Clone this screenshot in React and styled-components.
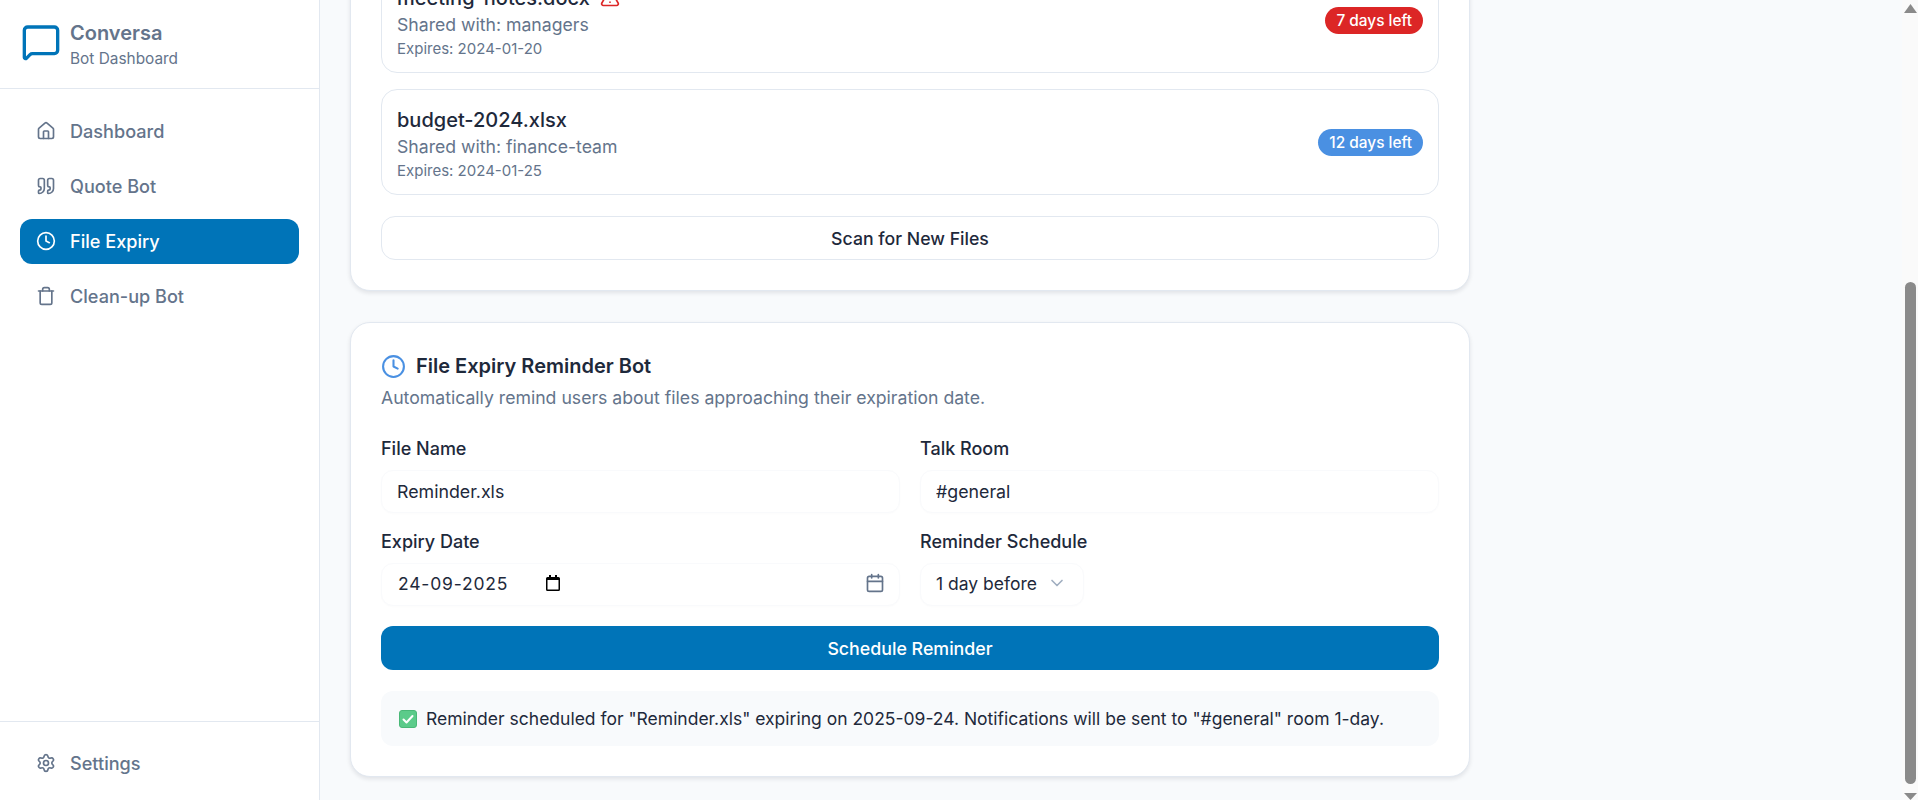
import React, { useLayoutEffect, useRef } from 'react';
import styled, { createGlobalStyle } from 'styled-components';
import { MessageSquare, House, Quote, Clock, Trash, Settings, TriangleAlert, Calendar, ChevronDown } from 'lucide-react';

const Global = createGlobalStyle`
  * { box-sizing: border-box; }
  html, body { margin: 0; padding: 0; height: 100%; overflow: hidden; }
  body { font-family: Inter, "Liberation Sans", sans-serif; color: #1e293b; background: #f8fafc; }
`;
const Shell = styled.div`display: flex; height: 100vh; background: #f8fafc;`;
const Sidebar = styled.aside`width: 320px; flex: none; display: flex; flex-direction: column; background: #fff; border-right: 1px solid #e2e8f0;`;
const Brand = styled.div`height: 89px; display: flex; align-items: center; gap: 9px; padding: 0 0 0 21px; border-bottom: 1px solid #e2e8f0; color: #0074b8;`;
const BrandMark = styled(MessageSquare)`margin-bottom: 5px;`;
const BrandText = styled.div`display: flex; flex-direction: column; gap: 3px;`;
const BrandName = styled.div`font-size: 20px; line-height: 26px; font-weight: 600; color: #64748b;`;
const BrandSub = styled.div`font-size: 15.4px; line-height: 20px; color: #64748b;`;
const Nav = styled.nav`flex: 1; display: flex; flex-direction: column; gap: 10px; padding: 20px 20px;`;
const NavItem = styled.div`
  height: 45px; display: flex; align-items: center; gap: 14px; padding: 0 16px 1px; border-radius: 12px;
  font-size: 18.1px; font-weight: 450; color: ${p => (p.$active ? '#fff' : '#64748b')};
  background: ${p => (p.$active ? '#0074b8' : 'transparent')};
`;
const SideFoot = styled.div`height: 79px; border-top: 1px solid #e2e8f0; padding: 19px 20px 0;`;
const Main = styled.main`flex: 1; min-width: 0; overflow-y: auto; scrollbar-width: none; padding: 24px 0 23px 30px;`;
const Column = styled.div`width: 1120px; display: flex; flex-direction: column; gap: 31px;`;
const PageHead = styled.header`height: 96px;`;
const PageTitle = styled.h1`margin: 0 0 8px; font-size: 30px; line-height: 36px; font-weight: 700;`;
const PageSub = styled.p`margin: 0; font-size: 16px; line-height: 24px; color: #64748b;`;
const Card = styled.section`background: #fff; border: 1px solid #e2e8f0; border-radius: 20px; padding: 29px 30px 30px; box-shadow: 0 2px 4px rgba(15, 23, 42, 0.1);`;
const CardHead = styled.div`display: flex; align-items: center; gap: 10px; height: 28px; color: #4a90e2;`;
const CardTitle = styled.h2`margin: 0; font-size: 20px; line-height: 28px; font-weight: 600; color: #1e293b;`;
const CardDesc = styled.p`margin: 6px 0 26px; font-size: 17.65px; line-height: 24px; color: #64748b;`;
const FileList = styled.div`display: flex; flex-direction: column; gap: 16px;`;
const FileRow = styled.div`display: flex; align-items: center; justify-content: space-between; height: 106px; padding: 0 15px; border: 1px solid #e2e8f0; border-radius: 16px; background: #fff;`;
const FileInfo = styled.div`display: flex; flex-direction: column; padding-top: 3px;`;
const FileName = styled.div`display: flex; align-items: center; gap: 10px; margin-bottom: 1px; font-size: 20px; line-height: 28px; font-weight: 500; color: #1e293b;`;
const FileShared = styled.div`font-size: 17.65px; line-height: 24px; color: #64748b;`;
const FileExpires = styled.div`font-size: 15px; line-height: 20px; margin-top: 2px; color: #64748b;`;
const Badge = styled.span`height: 27px; display: flex; align-items: center; padding: 0 11px; border-radius: 14px; font-size: 15.4px; font-weight: 500; color: #fff; background: ${p => p.$bg};`;
const OutlineButton = styled.button`width: 100%; height: 44px; margin-top: 21px; border: 1px solid #e2e8f0; border-radius: 14px; background: #fff; font: 500 17.7px Inter, sans-serif; color: #1e293b;`;
const FormGrid = styled.div`display: grid; grid-template-columns: 519px 519px; column-gap: 20px; row-gap: 16px;`;
const Field = styled.label`display: flex; flex-direction: column; align-items: flex-start; gap: 10px;`;
const LabelText = styled.span`font-size: 18px; line-height: 24px; font-weight: 450; padding-top: 1px; margin-bottom: -1px; color: #1e293b;`;
const Control = styled.div`
  height: 43px; width: ${p => p.$width || '100%'}; display: flex; align-items: center; padding: 0 14px ${p => (p.$lift ? '3px' : '0')} 15px;
  border: 1px solid #f9fafc; border-radius: 12px; background: #fff; box-shadow: 0 1px 2px rgba(15, 23, 42, 0.015);
  font-size: 17.5px; color: #1e293b;
`;
const TextInput = styled.input`width: 100%; border: 0; outline: 0; padding: 0; background: transparent; font: 400 17.8px Inter, sans-serif; color: #1e293b;`;
const DateText = styled.span`margin-left: 1px; letter-spacing: 0.8px;`;
const PickerIcon = styled.svg`margin-left: 38px; flex: none;`;
const PushRight = styled.span`margin-left: auto; display: flex; color: #64748b;`;
const Chevron = styled.span`margin-left: 10px; display: flex; color: #a0aec0;`;
const PrimaryButton = styled.button`width: 100%; height: 44px; margin-top: 20px; border: 0; border-radius: 12px; background: #0074b8; font: 500 17.8px Inter, sans-serif; color: #fff;`;
const Status = styled.div`display: flex; align-items: center; gap: 9px; height: 55px; margin-top: 21px; padding: 0 18px; border-radius: 12px; background: #f8fafc; font-size: 17.5px; color: #1e293b;`;
const Rail = styled.div`width: 16px; flex: none; display: flex; flex-direction: column; align-items: center; background: #fafafa;`;
const RailArrow = styled.svg`flex: none; display: block; margin-top: ${p => p.$top}px;`;
const RailThumb = styled.div`flex: none; width: 11px; height: 502px; margin-top: 269px; border-radius: 6px; background: #8a8a8a;`;

const Check = () => (
  <svg width="18" height="18" viewBox="0 0 18 18">
    <rect x="0.5" y="0.5" width="17" height="17" rx="2.5" fill="#5bcb8a" stroke="#49b877" />
    <path d="M4.500 9.500l3 3 6-6.500" fill="none" stroke="#fff" strokeWidth="2" strokeLinecap="round" strokeLinejoin="round" />
  </svg>
);
const Picker = () => (
  <PickerIcon width="14" height="16" viewBox="0 0 14 16">
    <path d="M3 0h2v2h4V0h2v2h1.500A1.500 1.500 0 0 1 14 3.500v11a1.500 1.500 0 0 1-1.500 1.500h-11A1.500 1.500 0 0 1 0 14.500v-11A1.500 1.500 0 0 1 1.500 2H3zM1.500 5v9.500h11V5z" fill="#000" />
  </PickerIcon>
);

export default function App() {
  const scroller = useRef(null);
  useLayoutEffect(() => { scroller.current.scrollTop = scroller.current.scrollHeight; }, []);
  const nav = [
    [House, 'Dashboard'], [Quote, 'Quote Bot'], [Clock, 'File Expiry', true], [Trash, 'Clean-up Bot'],
  ];
  return (
    <Shell>
      <Global />
      <Sidebar>
        <Brand>
          <BrandMark size={40} strokeWidth={2} />
          <BrandText>
            <BrandName>Conversa</BrandName>
            <BrandSub>Bot Dashboard</BrandSub>
          </BrandText>
        </Brand>
        <Nav>
          {nav.map(([Icon, label, active]) => (
            <NavItem key={label} $active={active}><Icon size={20} />{label}</NavItem>
          ))}
        </Nav>
        <SideFoot>
          <NavItem><Settings size={20} />Settings</NavItem>
        </SideFoot>
      </Sidebar>
      <Main ref={scroller}>
        <Column>
          <PageHead>
            <PageTitle>File Expiry</PageTitle>
            <PageSub>Track shared files and remind people before they expire.</PageSub>
          </PageHead>
          <Card>
            <CardTitle>Files Nearing Expiry</CardTitle>
            <CardDesc>Shared files that will expire soon.</CardDesc>
            <FileList>
              <FileRow>
                <FileInfo>
                  <FileName>meeting-notes.docx <TriangleAlert size={20} color="#dc2626" /></FileName>
                  <FileShared>Shared with: managers</FileShared>
                  <FileExpires>Expires: 2024-01-20</FileExpires>
                </FileInfo>
                <Badge $bg="#dc2626">7 days left</Badge>
              </FileRow>
              <FileRow>
                <FileInfo>
                  <FileName>budget-2024.xlsx</FileName>
                  <FileShared>Shared with: finance-team</FileShared>
                  <FileExpires>Expires: 2024-01-25</FileExpires>
                </FileInfo>
                <Badge $bg="#4a90e2">12 days left</Badge>
              </FileRow>
            </FileList>
            <OutlineButton>Scan for New Files</OutlineButton>
          </Card>
          <Card>
            <CardHead>
              <Clock size={25} />
              <CardTitle>File Expiry Reminder Bot</CardTitle>
            </CardHead>
            <CardDesc>Automatically remind users about files approaching their expiration date.</CardDesc>
            <FormGrid>
              <Field>
                <LabelText>File Name</LabelText>
                <Control><TextInput defaultValue="Reminder.xls" /></Control>
              </Field>
              <Field>
                <LabelText>Talk Room</LabelText>
                <Control><TextInput defaultValue="#general" /></Control>
              </Field>
              <Field>
                <LabelText>Expiry Date</LabelText>
                <Control $lift>
                  <DateText>24-09-2025</DateText>
                  <Picker />
                  <PushRight><Calendar size={20} /></PushRight>
                </Control>
              </Field>
              <Field>
                <LabelText>Reminder Schedule</LabelText>
                <Control $width="164px" $lift>
                  1 day before
                  <Chevron><ChevronDown size={20} /></Chevron>
                </Control>
              </Field>
            </FormGrid>
            <PrimaryButton>Schedule Reminder</PrimaryButton>
            <Status>
              <Check />
              Reminder scheduled for "Reminder.xls" expiring on 2025-09-24. Notifications will be sent to "#general" room 1-day.
            </Status>
          </Card>
        </Column>
      </Main>
      <Rail aria-hidden="true">
        <RailArrow $top={4} width="13" height="9" viewBox="0 0 13 9"><path d="M6.500 0L13 9H0z" fill="#8a8a8a" /></RailArrow>
        <RailThumb />
        <RailArrow $top={9} width="13" height="7" viewBox="0 0 13 7"><path d="M0 0h13L6.500 7z" fill="#8a8a8a" /></RailArrow>
      </Rail>
    </Shell>
  );
}
